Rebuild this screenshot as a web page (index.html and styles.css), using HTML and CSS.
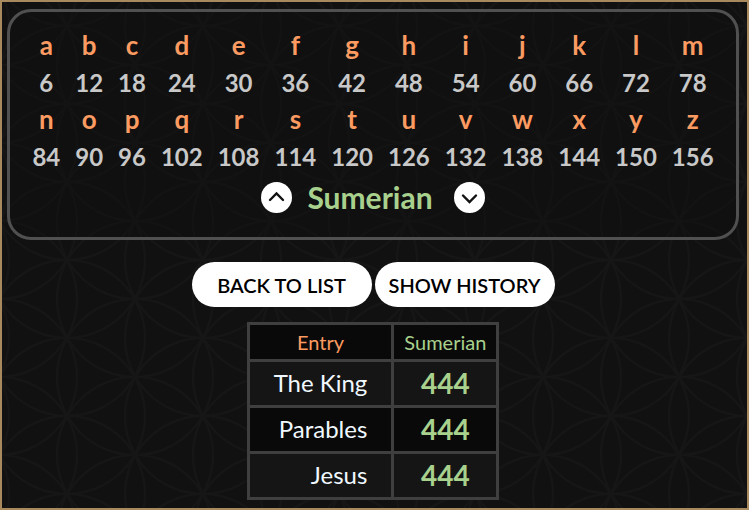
FILE: index.html
```html
<!DOCTYPE html>
<html lang="en">
<head>
    <meta charset="UTF-8">
    <meta name="viewport" content="width=device-width, initial-scale=1.0">
    <title>Sumerian Gematria</title>
    <link rel="stylesheet" href="styles.css">
</head>
<body>
    <div class="cipher-chart">
        <table class="letters">
            <tr><th>a</th><th>b</th><th>c</th><th>d</th><th>e</th><th>f</th><th>g</th><th>h</th><th>i</th><th>j</th><th>k</th><th>l</th><th>m</th></tr>
            <tr><td>6</td><td>12</td><td>18</td><td>24</td><td>30</td><td>36</td><td>42</td><td>48</td><td>54</td><td>60</td><td>66</td><td>72</td><td>78</td></tr>
            <tr><th>n</th><th>o</th><th>p</th><th>q</th><th>r</th><th>s</th><th>t</th><th>u</th><th>v</th><th>w</th><th>x</th><th>y</th><th>z</th></tr>
            <tr><td>84</td><td>90</td><td>96</td><td>102</td><td>108</td><td>114</td><td>120</td><td>126</td><td>132</td><td>138</td><td>144</td><td>150</td><td>156</td></tr>
        </table>
        <div class="cipher-nav">
            <button class="arrow" aria-label="Previous cipher">
                <svg viewBox="0 0 31 31" width="31" height="31"><path d="M9 18 L15.5 11.5 L22 18"/></svg>
            </button>
            <span class="cipher-name">Sumerian</span>
            <button class="arrow" aria-label="Next cipher">
                <svg viewBox="0 0 31 31" width="31" height="31"><path d="M9 13.5 L15.5 20 L22 13.5"/></svg>
            </button>
        </div>
    </div>

    <div class="actions">
        <button class="action-btn">BACK TO LIST</button>
        <button class="action-btn">SHOW HISTORY</button>
    </div>

    <table class="history">
        <tr><th class="entry-head">Entry</th><th class="value-head">Sumerian</th></tr>
        <tr><td class="phrase">The King</td><td class="value">444</td></tr>
        <tr><td class="phrase">Parables</td><td class="value">444</td></tr>
        <tr><td class="phrase">Jesus</td><td class="value">444</td></tr>
    </table>
</body>
</html>
```

FILE: styles.css
```css
* {
    box-sizing: border-box;
}
html {
    background-color: #111111;
}
/* flower of life tile */
body {
    margin: 0;
    min-height: 100vh;
    padding: 7px 8px 8px 5px;
    border: 2px solid #a98a5e;
    font-family: Lato, sans-serif;
    background-color: #111111;
    background-image: url("data:image/svg+xml,%3Csvg xmlns='http://www.w3.org/2000/svg' width='136' height='78' viewBox='0 0 136 78'%3E%3Cg fill='none' stroke='%23161616' stroke-width='2'%3E%3Ccircle cx='0' cy='0' r='78'/%3E%3Ccircle cx='136' cy='0' r='78'/%3E%3Ccircle cx='0' cy='78' r='78'/%3E%3Ccircle cx='136' cy='78' r='78'/%3E%3Ccircle cx='68' cy='39' r='78'/%3E%3Ccircle cx='68' cy='-39' r='78'/%3E%3Ccircle cx='68' cy='117' r='78'/%3E%3Ccircle cx='-68' cy='39' r='78'/%3E%3Ccircle cx='204' cy='39' r='78'/%3E%3Ccircle cx='0' cy='-78' r='78'/%3E%3Ccircle cx='136' cy='-78' r='78'/%3E%3Ccircle cx='0' cy='156' r='78'/%3E%3Ccircle cx='136' cy='156' r='78'/%3E%3C/g%3E%3C/svg%3E");
    background-position: 65px 24px;
}
.cipher-chart {
    padding: 15px 12px 22px;
    border: 3px solid #505050;
    border-radius: 24px;
    background-color: rgba(16, 16, 16, 0.4);
}
.letters {
    margin: 0 auto;
    border-collapse: separate;
    border-spacing: 1px 0;
    font-size: 24px;
    line-height: 37px;
    text-align: center;
}
.letters th,
.letters td {
    padding: 0 7px;
    font-weight: bold;
}
.letters th {
    color: #fb9b61;
    font-size: 26px;
}
.letters td {
    color: #c8c8c8;
}
.cipher-nav {
    display: flex;
    justify-content: center;
    align-items: center;
    gap: 15px;
    margin-top: 5px;
}
.cipher-name {
    padding-right: 6px;
    color: #a9d18e;
    font-size: 30px;
    font-weight: bold;
    line-height: 35px;
}
.arrow {
    width: 31px;
    height: 31px;
    padding: 0;
    border: none;
    border-radius: 50%;
    background-color: #ffffff;
    cursor: pointer;
}
.arrow svg {
    display: block;
    fill: none;
    stroke: #111111;
    stroke-width: 2.4;
    stroke-linecap: round;
}
.actions {
    display: flex;
    justify-content: center;
    gap: 3px;
    margin: 22px 0 15px;
}
.action-btn {
    width: 180px;
    height: 45px;
    padding: 0;
    border: none;
    border-radius: 23px;
    background-color: #ffffff;
    color: #000000;
    font-family: inherit;
    font-size: 20px;
    font-weight: 600;
    cursor: pointer;
}
.history {
    margin: 0 auto;
    border-collapse: collapse;
}
.history th,
.history td {
    border: 3px solid #3f3f3f;
    line-height: 30px;
    text-align: center;
}
.history tr {
    background-color: #151515;
}
.history tr:nth-child(odd) {
    background-color: #090909;
}
.history th {
    height: 37px;
    padding: 0 10px;
    font-size: 20px;
    font-weight: normal;
}
.history td {
    height: 46px;
    padding: 0 24px 1px;
}
.history .entry-head {
    color: #fb9b61;
}
.history .value-head {
    color: #a9d18e;
}
.history .phrase {
    color: #f0f8ff;
    font-size: 24px;
    text-align: right;
}
.history .value {
    color: #a9d18e;
    font-size: 28px;
    font-weight: bold;
}
```
